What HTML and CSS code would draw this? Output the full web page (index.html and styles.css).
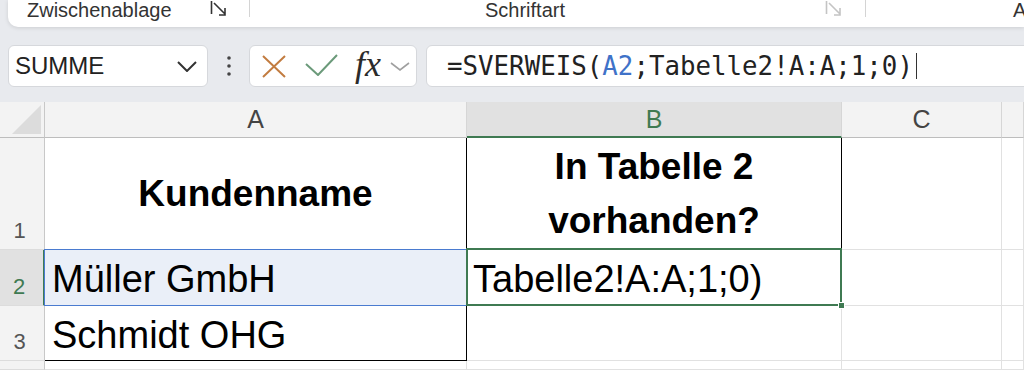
FILE: index.html
```html
<!DOCTYPE html>
<html lang="de">
<head>
    <meta charset="UTF-8">
    <title>SVERWEIS</title>
    <link rel="stylesheet" href="styles.css">
</head>
<body>

    <!-- Ribbon (only the group labels are visible) -->
    <div class="ribbon">
        <div class="group clipboard">
            <span class="group-label">Zwischenablage</span>
            <svg class="launcher" width="18" height="16" viewBox="0 0 18 16">
                <path d="M1.5 0 V13 M4 2 L15 13 M15 7 V14 H9" fill="none" stroke="currentColor" stroke-width="1.6"/>
            </svg>
        </div>
        <div class="sep"></div>
        <div class="group font">
            <span class="group-label">Schriftart</span>
            <svg class="launcher off" width="18" height="16" viewBox="0 0 18 16">
                <path d="M1.5 0 V13 M4 2 L15 13 M15 7 V14 H9" fill="none" stroke="currentColor" stroke-width="1.6"/>
            </svg>
        </div>
        <div class="sep"></div>
        <div class="group align">
            <span class="group-label">Ausrichtung</span>
        </div>
    </div>

    <!-- Formula bar -->
    <div class="formula-bar">
        <div class="name-box">
            <span>SUMME</span>
            <svg width="20" height="11" viewBox="0 0 20 11">
                <polyline points="1,1 10,10 19,1" fill="none" stroke="#333" stroke-width="2"/>
            </svg>
        </div>
        <div class="more">
            <svg width="4" height="20" viewBox="0 0 4 20">
                <circle cx="2" cy="2" r="1.8" fill="#444"/>
                <circle cx="2" cy="10" r="1.8" fill="#444"/>
                <circle cx="2" cy="18" r="1.8" fill="#444"/>
            </svg>
        </div>
        <div class="edit-buttons">
            <svg class="cancel" width="24" height="23" viewBox="0 0 24 23">
                <path d="M1 1 L23 22 M23 1 L1 22" fill="none" stroke="#c27c40" stroke-width="2"/>
            </svg>
            <svg class="enter" width="33" height="22" viewBox="0 0 33 22">
                <polyline points="1,10 13,21 32,1" fill="none" stroke="#6b9a7a" stroke-width="2"/>
            </svg>
            <span class="fx">fx</span>
            <svg class="fx-menu" width="20" height="9" viewBox="0 0 20 9">
                <polyline points="1,1 10,8 19,1" fill="none" stroke="#a0a0a0" stroke-width="1.6"/>
            </svg>
        </div>
        <div class="formula">
            <span>=SVERWEIS(<span class="ref-a2">A2</span>;Tabelle2!A:A;1;0)</span><span class="caret"></span>
        </div>
    </div>

    <!-- Sheet -->
    <div class="sheet">
        <div class="corner">
            <svg width="30" height="30" viewBox="0 0 30 30"><polygon points="29,0 29,29 0,29" fill="#dcdcdc"/></svg>
        </div>
        <div class="col-head">A</div>
        <div class="col-head active">B</div>
        <div class="col-head">C</div>
        <div class="col-head"></div>

        <div class="row-head">1</div>
        <div class="cell title a-col">Kundenname</div>
        <div class="cell title boxed">In Tabelle 2<br>vorhanden?</div>
        <div class="cell"></div>
        <div class="cell"></div>

        <div class="row-head active">2</div>
        <div class="cell a-col ref">Müller GmbH</div>
        <div class="cell current">Tabelle2!A:A;1;0)</div>
        <div class="cell"></div>
        <div class="cell"></div>

        <div class="row-head">3</div>
        <div class="cell a-col last">Schmidt OHG</div>
        <div class="cell"></div>
        <div class="cell"></div>
        <div class="cell"></div>

        <div class="row-head"></div>
        <div class="cell"></div>
        <div class="cell"></div>
        <div class="cell"></div>
        <div class="cell"></div>
    </div>

</body>
</html>
```

FILE: styles.css
```css
/* General */
body {
    margin: 0;
    width: 1024px;
    height: 370px;
    overflow: hidden;
    background: #e8eaee;
    font-family: "Liberation Sans", Arial, sans-serif;
    color: #222;
}

/* Ribbon */
.ribbon {
    display: flex;
    align-items: flex-start;
    height: 27px;
    margin-left: 8px;
    background: #fff;
    border-radius: 0 0 0 10px;
    box-shadow: 0 1px 4px rgba(0, 0, 0, 0.12);
    white-space: nowrap;
}

.group {
    display: flex;
    flex-shrink: 0;
    align-items: flex-start;
    box-sizing: border-box;
}

.group-label {
    font-size: 20px;
    line-height: 20px;
    color: #333;
}

.clipboard {
    width: 241px;
    padding: 0 21px 0 19px;
    justify-content: space-between;
}

.font {
    width: 615px;
    padding: 0 22px 0 235px;
    justify-content: space-between;
}

.align {
    padding-left: 147px;
}

.launcher {
    margin-top: 1px;
    color: #333;
}

.launcher.off {
    color: #c4c4c4;
}

.sep {
    flex-shrink: 0;
    width: 1px;
    height: 17px;
    background: #d4d4d4;
}

/* Formula bar */
.formula-bar {
    display: flex;
    height: 42px;
    margin: 18px -30px 0 8px;
}

.formula-bar > div {
    box-sizing: border-box;
    display: flex;
    align-items: center;
}

.name-box,
.edit-buttons,
.formula {
    background: #fff;
    border: 1px solid #d6d8dc;
    border-radius: 6px;
}

.name-box {
    width: 200px;
    padding: 0 10px 0 6px;
    justify-content: space-between;
    font-size: 24px;
    color: #222;
}

.more {
    width: 41px;
    justify-content: center;
}

.edit-buttons {
    width: 168px;
    padding-left: 12px;
}

.enter {
    margin-left: 19px;
    margin-top: -2px;
}

.fx {
    margin-left: 17px;
    font-family: "Liberation Serif", "Times New Roman", serif;
    font-style: italic;
    font-size: 36px;
    color: #2b2b2b;
    line-height: 1;
    margin-top: -4px;
}

.fx-menu {
    margin-left: 9px;
}

.formula {
    flex: 1;
    margin-left: 9px;
    padding-left: 20px;
    font-family: "DejaVu Sans Mono", monospace;
    font-size: 25.8px;
    color: #222;
}

.ref-a2 {
    color: #3f72c8;
}

.caret {
    width: 1px;
    height: 26px;
    margin-left: 3px;
    background: #333;
}

/* Sheet grid */
.sheet {
    display: grid;
    grid-template-columns: 45px 422px 375px 160px 1fr;
    grid-template-rows: 36px 112px 56px 55px 1fr;
    height: 268px;
    margin-top: 15px;
    background: #fff;
}

.corner {
    background: #f3f3f3;
    border-right: 1px solid #c8c8c8;
    border-bottom: 1px solid #bdbdbd;
    display: flex;
    align-items: flex-end;
    justify-content: flex-end;
    padding: 0 2px 2px 0;
}

.col-head {
    display: flex;
    align-items: center;
    justify-content: center;
    background: #f3f3f3;
    border-right: 1px solid #d6d6d6;
    border-bottom: 1px solid #bdbdbd;
    font-size: 25px;
    color: #444;
}

.col-head.active {
    background: #e1e1e1;
    border-bottom: 2px solid #3f7a52;
    color: #3f7a52;
}

.row-head {
    display: flex;
    align-items: flex-end;
    justify-content: center;
    padding: 0 5px 5px 0;
    background: #f3f3f3;
    border-right: 1px solid #c8c8c8;
    border-bottom: 1px solid #dcdcdc;
    font-size: 22px;
    color: #555;
}

.row-head.active {
    background: #e1e1e1;
    border-right: 2px solid #3f7a52;
    color: #3f7a52;
}

.cell {
    display: flex;
    align-items: center;
    padding: 4px 0 0 7px;
    border-right: 1px solid #e1e1e1;
    border-bottom: 1px solid #e1e1e1;
    font-size: 38px;
    color: #000;
    white-space: nowrap;
}

.title {
    justify-content: center;
    padding: 0;
    text-align: center;
    font-weight: bold;
    font-size: 37px;
    line-height: 54px;
}

.a-col,
.boxed {
    border-right-color: #000;
}

.last {
    border-bottom-color: #000;
}

/* Referenced range A2 */
.ref {
    position: relative;
    background: #eaeff8;
}

.ref::after {
    content: "";
    position: absolute;
    top: -1px;
    left: -1px;
    right: -1px;
    bottom: -1px;
    border: 1.5px solid #4a7bd0;
}

/* Active cell B2 */
.current {
    position: relative;
    padding-left: 6px;
}

.current::after {
    content: "";
    position: absolute;
    top: -2px;
    left: -1px;
    right: -1px;
    bottom: -1px;
    border: 2px solid #3f7a52;
}

.current::before {
    content: "";
    position: absolute;
    right: -4px;
    bottom: -4px;
    width: 5px;
    height: 5px;
    background: #3f7a52;
    border: 1px solid #fff;
    z-index: 1;
}
```
